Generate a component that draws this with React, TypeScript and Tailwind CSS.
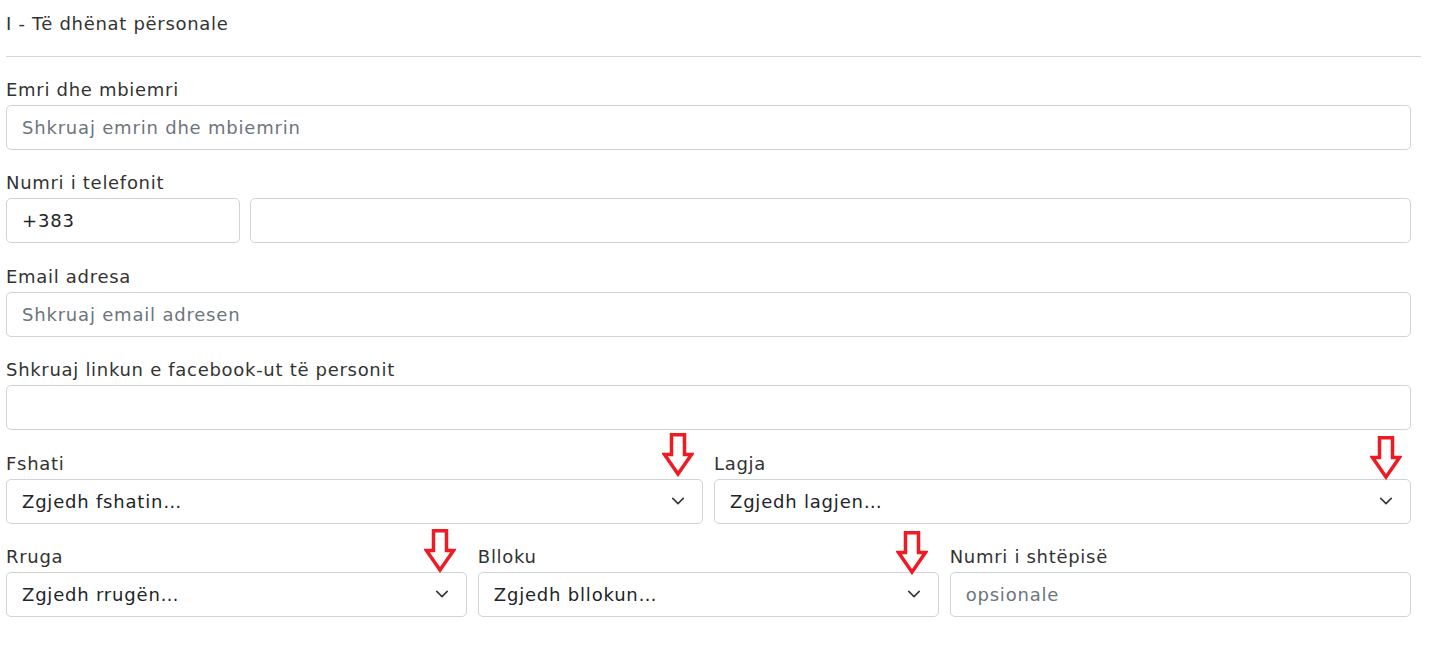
import React from 'react';

const font = { fontFamily: '"DejaVu Sans", "Liberation Sans", sans-serif' };

const Chevron = () => (
  <svg width="14" height="14" viewBox="0 0 16 16" fill="none">
    <path d="m2 5 6 6 6-6" stroke="#343a40" strokeWidth="1.9" strokeLinecap="round" strokeLinejoin="round" />
  </svg>
);

const RedArrow = ({ className }: { className: string }) => (
  <svg className={`absolute ${className}`} width="32" height="44" viewBox="0 0 32 44" fill="none">
    <path d="M9.5 1.75H22.5V21.5H29.5L16 41L2.5 21.5H9.5Z" stroke="#ed1c24" strokeWidth="3.5" strokeLinejoin="miter" />
  </svg>
);

const Label = ({ children }: { children: React.ReactNode }) => (
  <label className="block text-[18px] leading-[24px] text-[#333] tracking-[0.7px] mb-[3px]">{children}</label>
);

const Input = ({ placeholder, value }: { placeholder?: string; value?: string }) => (
  <div className="h-[45px] border border-[#ced4da] rounded-[5px] bg-white flex items-center px-[15px] text-[18px] tracking-[0.8px]">
    {value ? (
      <span className="text-[#212529]">{value}</span>
    ) : (
      <span className="text-[#6c757d]">{placeholder}</span>
    )}
  </div>
);

const Select = ({ text }: { text: string }) => (
  <div className="h-[45px] border border-[#ced4da] rounded-[5px] bg-white flex items-center justify-between pl-[15px] pr-[17px] text-[18px] tracking-[0.8px] text-[#212529]">
    <span>
      {text}
      <span className="tracking-normal">…</span>
    </span>
    <Chevron />
  </div>
);

export default function App() {
  return (
    <div className="relative bg-white w-[1430px] h-[645px] overflow-hidden pl-[6px] pr-[9px] pt-[12px]" style={font}>
      <h2 className="text-[18px] leading-[24px] font-medium text-[#333] tracking-[0.7px]">I - Të dhënat përsonale</h2>
      <div className="h-px bg-[#d6d6d6] mt-[20px] mb-[21px]" />
      <div className="pr-[10px] flex flex-col gap-[21.4px]">
        <div>
          <Label>Emri dhe mbiemri</Label>
          <Input placeholder="Shkruaj emrin dhe mbiemrin" />
        </div>
        <div>
          <Label>Numri i telefonit</Label>
          <div className="flex gap-[10px]">
            <div className="w-[234px]">
              <Input value="+383" />
            </div>
            <div className="flex-1">
              <Input placeholder="" />
            </div>
          </div>
        </div>
        <div>
          <Label>Email adresa</Label>
          <Input placeholder="Shkruaj email adresen" />
        </div>
        <div>
          <Label>Shkruaj linkun e facebook-ut të personit</Label>
          <Input placeholder="" />
        </div>
        <div className="grid grid-cols-2 gap-[11px]">
          <div>
            <Label>Fshati</Label>
            <Select text="Zgjedh fshatin" />
          </div>
          <div>
            <Label>Lagja</Label>
            <Select text="Zgjedh lagjen" />
          </div>
        </div>
        <div className="grid grid-cols-3 gap-[10.5px]">
          <div>
            <Label>Rruga</Label>
            <Select text="Zgjedh rrugën" />
          </div>
          <div>
            <Label>Blloku</Label>
            <Select text="Zgjedh bllokun" />
          </div>
          <div>
            <Label>Numri i shtëpisë</Label>
            <Input placeholder="opsionale" />
          </div>
        </div>
      </div>
      <RedArrow className="left-[662px] top-[433px]" />
      <RedArrow className="left-[1370px] top-[436px]" />
      <RedArrow className="left-[424px] top-[529px]" />
      <RedArrow className="left-[896px] top-[531px]" />
    </div>
  );
}
